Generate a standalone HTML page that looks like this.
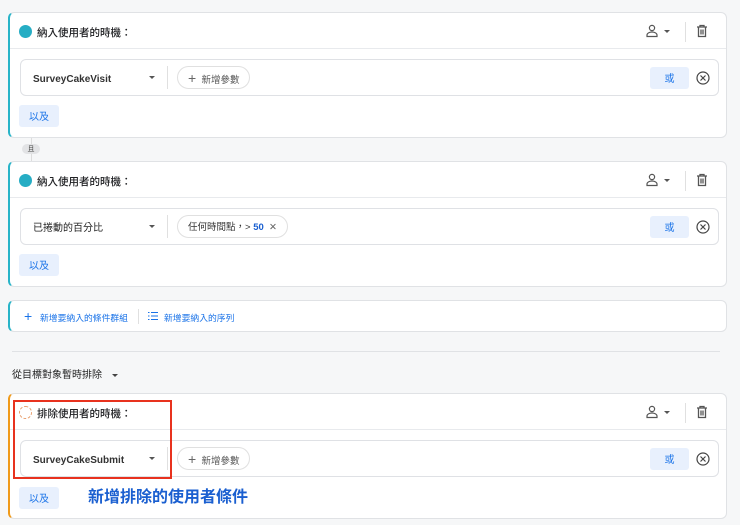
<!DOCTYPE html>
<html><head><meta charset="utf-8"><style>
*{box-sizing:border-box;margin:0;padding:0}
body{width:740px;height:525px;background:#f6f7f8;font-family:"Liberation Sans","Noto Sans CJK TC",sans-serif;position:relative;overflow:hidden;color:#202124}
.a{position:absolute}
.card{position:absolute;left:8px;width:719px;background:#fff;border:1px solid #e0e2e5;border-radius:6px;border-left:2px solid #28b4c8}
.hdr{position:absolute;left:0;right:0;top:0;height:36px;border-bottom:1px solid #e8eaed}
.dot{position:absolute;left:9px;top:12px;width:13px;height:13px;border-radius:50%;background:#26adc4}
.ht{position:absolute;left:27px;top:12px;height:16px;line-height:16px;font-size:10.5px;font-weight:500}
.inner{position:absolute;left:10px;width:699px;height:37px;border:1px solid #dfe1e5;border-radius:6px;background:#fff}
.sel{position:absolute;left:12px;top:2px;height:35px;line-height:35px;font-size:10px;font-weight:bold;color:#333}
.caret{position:absolute;left:128px;top:16px;border-left:3px solid transparent;border-right:3px solid transparent;border-top:3px solid #555}
.vd{position:absolute;left:146px;top:6px;width:1px;height:23px;background:#e0e0e0}
.chip{position:absolute;left:156px;top:6px;height:23px;border:1px solid #e0e0e0;border-radius:12px;font-size:9.5px;color:#555;padding:2px 10px 0;line-height:19px;white-space:nowrap}
.or{position:absolute;right:29px;top:7px;width:39px;height:22px;background:#e8f0fd;border-radius:3px;color:#1a73e8;font-size:10px;text-align:center;line-height:22px;padding-top:2px}
.xc{position:absolute;right:8px;top:11px}
.and{position:absolute;left:9px;width:40px;height:22px;background:#e8f0fd;border-radius:3px;color:#1a73e8;font-size:10px;text-align:center;line-height:22px;padding-top:2px}
.ic{position:absolute;top:11px}
</style></head><body>

<!-- card 1 -->
<div class="card" style="top:12px;height:126px">
 <div class="hdr"><div class="dot"></div><div class="ht">納入使用者的時機：</div>
  <svg class="ic" style="left:636px" width="26" height="14" viewBox="0 0 26 14"><circle cx="6" cy="4" r="2.6" fill="none" stroke="#555" stroke-width="1.2"/><path d="M1 12.5v-1.5c0-2 3-3 5-3s5 1 5 3v1.5z" fill="none" stroke="#555" stroke-width="1.2"/><path d="M18 6h6l-3 3z" fill="#555"/></svg>
  <div class="a" style="left:675px;top:9px;width:1px;height:20px;background:#e0e0e0"></div>
  <svg class="ic" style="left:686px" width="12" height="14" viewBox="0 0 12 14"><path d="M1 3h10M4 3V1.5h4V3M2.5 3v9.5h7V3M5 5.5v5M7 5.5v5" fill="none" stroke="#555" stroke-width="1.3"/></svg>
 </div>
 <div class="inner" style="top:46px"><div class="sel">SurveyCakeVisit</div><div class="caret"></div><div class="vd"></div>
  <div class="chip"><span style="font-size:14px;color:#666">+</span>&nbsp; 新增參數</div>
  <div class="or">或</div>
  <svg class="xc" width="14" height="14" viewBox="0 0 14 14"><circle cx="7" cy="7" r="6" fill="none" stroke="#444" stroke-width="1.2"/><path d="M4.5 4.5l5 5M9.5 4.5l-5 5" stroke="#444" stroke-width="1.2"/></svg>
 </div>
 <div class="and" style="top:92px">以及</div>
</div>

<div class="a" style="left:31px;top:138px;width:1px;height:24px;background:#ddd"></div>
<div class="a" style="left:22px;top:144px;width:18px;height:10px;background:#e2e3e5;border-radius:5px;font-size:7px;text-align:center;line-height:10px;color:#444;padding-top:1px">且</div>

<!-- card 2 -->
<div class="card" style="top:161px;height:126px">
 <div class="hdr"><div class="dot"></div><div class="ht">納入使用者的時機：</div>
  <svg class="ic" style="left:636px" width="26" height="14" viewBox="0 0 26 14"><circle cx="6" cy="4" r="2.6" fill="none" stroke="#555" stroke-width="1.2"/><path d="M1 12.5v-1.5c0-2 3-3 5-3s5 1 5 3v1.5z" fill="none" stroke="#555" stroke-width="1.2"/><path d="M18 6h6l-3 3z" fill="#555"/></svg>
  <div class="a" style="left:675px;top:9px;width:1px;height:20px;background:#e0e0e0"></div>
  <svg class="ic" style="left:686px" width="12" height="14" viewBox="0 0 12 14"><path d="M1 3h10M4 3V1.5h4V3M2.5 3v9.5h7V3M5 5.5v5M7 5.5v5" fill="none" stroke="#555" stroke-width="1.3"/></svg>
 </div>
 <div class="inner" style="top:46px"><div class="sel" style="font-weight:normal;color:#222;top:2px">已捲動的百分比</div><div class="caret"></div><div class="vd"></div>
  <div class="chip" style="color:#333">任何時間點，&gt; <span style="color:#1a5fd0;font-weight:bold">50</span>&nbsp;&nbsp;<span style="color:#666">✕</span></div>
  <div class="or">或</div>
  <svg class="xc" width="14" height="14" viewBox="0 0 14 14"><circle cx="7" cy="7" r="6" fill="none" stroke="#444" stroke-width="1.2"/><path d="M4.5 4.5l5 5M9.5 4.5l-5 5" stroke="#444" stroke-width="1.2"/></svg>
 </div>
 <div class="and" style="top:92px">以及</div>
</div>

<!-- card 3 -->
<div class="card" style="top:300px;height:32px">
 <div class="a" style="left:14px;top:0;height:30px;line-height:30px;font-size:14px;color:#1a73e8">+</div>
 <div class="a" style="left:30px;top:2px;height:30px;line-height:30px;font-size:8.8px;color:#1a73e8">新增要納入的條件群組</div>
 <div class="a" style="left:128px;top:8px;width:1px;height:15px;background:#e0e0e0"></div>
 <svg class="a" style="left:138px;top:10px" width="10" height="10" viewBox="0 0 10 10"><path d="M0 1.5h1.5M3 1.5h7M0 5h1.5M3 5h7M0 8.5h1.5M3 8.5h7" stroke="#1a73e8" stroke-width="1"/></svg>
 <div class="a" style="left:154px;top:2px;height:30px;line-height:30px;font-size:8.8px;color:#1a73e8">新增要納入的序列</div>
</div>

<div class="a" style="left:12px;top:351px;width:708px;height:1px;background:#e0e2e5"></div>
<div class="a" style="left:12px;top:367px;height:18px;line-height:18px;font-size:10px;color:#222">從目標對象暫時排除</div>
<div class="a" style="left:112px;top:374px;border-left:3px solid transparent;border-right:3px solid transparent;border-top:3px solid #444"></div>

<!-- card 4 -->
<div class="card" style="top:393px;height:126px;border-left-color:#f09a1a">
 <div class="hdr"><div class="dot" style="background:none;border:1px dashed #e8a070"></div><div class="ht">排除使用者的時機：</div>
  <svg class="ic" style="left:636px" width="26" height="14" viewBox="0 0 26 14"><circle cx="6" cy="4" r="2.6" fill="none" stroke="#555" stroke-width="1.2"/><path d="M1 12.5v-1.5c0-2 3-3 5-3s5 1 5 3v1.5z" fill="none" stroke="#555" stroke-width="1.2"/><path d="M18 6h6l-3 3z" fill="#555"/></svg>
  <div class="a" style="left:675px;top:9px;width:1px;height:20px;background:#e0e0e0"></div>
  <svg class="ic" style="left:686px" width="12" height="14" viewBox="0 0 12 14"><path d="M1 3h10M4 3V1.5h4V3M2.5 3v9.5h7V3M5 5.5v5M7 5.5v5" fill="none" stroke="#555" stroke-width="1.3"/></svg>
 </div>
 <div class="inner" style="top:46px"><div class="sel">SurveyCakeSubmit</div><div class="caret"></div><div class="vd"></div>
  <div class="chip"><span style="font-size:14px;color:#666">+</span>&nbsp; 新增參數</div>
  <div class="or">或</div>
  <svg class="xc" width="14" height="14" viewBox="0 0 14 14"><circle cx="7" cy="7" r="6" fill="none" stroke="#444" stroke-width="1.2"/><path d="M4.5 4.5l5 5M9.5 4.5l-5 5" stroke="#444" stroke-width="1.2"/></svg>
 </div>
 <div class="and" style="top:93px">以及</div>
 <div class="a" style="left:78px;top:92px;height:24px;line-height:24px;font-size:16px;font-weight:bold;color:#1a5fd0">新增排除的使用者條件</div>
</div>

<div class="a" style="left:13px;top:400px;width:159px;height:79px;border:2px solid #e8321e"></div>
</body></html>
